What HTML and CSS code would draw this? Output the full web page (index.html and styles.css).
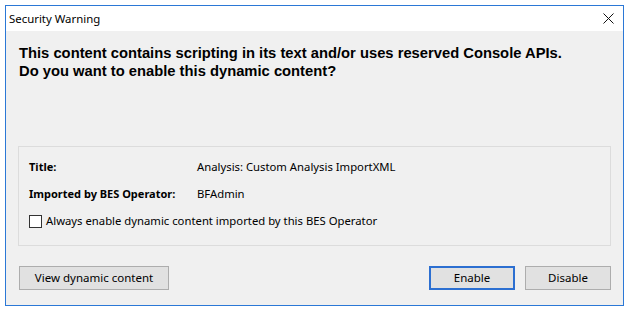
FILE: index.html
```html
<!DOCTYPE html>
<html lang="en">

<head>
    <meta charset="UTF-8">
    <meta name="viewport" content="width=device-width, initial-scale=1.0">
    <title>Security Warning</title>
    <link rel="stylesheet" href="styles.css">
</head>

<body>
    <div class="window">
        <div class="titlebar">
            <span class="caption">Security Warning</span>
            <svg class="close" width="11" height="11" viewBox="0 0 11 11">
                <path d="M0.5 0.5 L10.5 10.5 M10.5 0.5 L0.5 10.5" stroke="#111" stroke-width="1" fill="none" />
            </svg>
        </div>

        <div class="content">
            <p class="warning">
                This content contains scripting in its text and/or uses reserved Console APIs.<br>
                Do you want to enable this dynamic content?
            </p>

            <div class="details">
                <div class="row">
                    <span class="label">Title:</span>
                    <span class="value">Analysis: Custom Analysis ImportXML</span>
                </div>
                <div class="row">
                    <span class="label">Imported by BES Operator:</span>
                    <span class="value">BFAdmin</span>
                </div>
                <label class="check">
                    <span class="box"></span>
                    Always enable dynamic content imported by this BES Operator
                </label>
            </div>

            <div class="buttons">
                <button class="btn wide">View dynamic content</button>
                <div class="right">
                    <button class="btn default">Enable</button>
                    <button class="btn">Disable</button>
                </div>
            </div>
        </div>
    </div>
</body>

</html>
```

FILE: styles.css
```css
body {
    margin: 0;
    padding: 5px;
    background: #fff;
    font-family: "Noto Sans", sans-serif;
    font-size: 11.3px;
    color: #000;
}

.window {
    width: 617px;
    border: 1px solid #2b78d6;
    background: #f0f0f0;
}

.titlebar {
    height: 25px;
    background: #fff;
    display: flex;
    align-items: center;
    justify-content: space-between;
    padding: 0 9px 0 3px;
}

.caption {
    font-size: 11.4px;
    line-height: 16px;
}

.content {
    padding: 13px 12px 15px 12px;
}

.warning {
    margin: 0 0 0 1px;
    font-family: "Liberation Sans", Arial, sans-serif;
    font-weight: bold;
    font-size: 14.75px;
    line-height: 18px;
}

.details {
    margin-top: 66px;
    border: 1px solid #dcdcdc;
    padding: 12px 0 0 10px;
    box-sizing: border-box;
    height: 100px;
}

.row {
    display: flex;
    line-height: 16px;
    margin-bottom: 11px;
}

.label {
    width: 168px;
    font-weight: bold;
    font-size: 11px;
}

.check {
    display: flex;
    align-items: center;
    gap: 4px;
    line-height: 16px;
    margin-top: 1px;
}

.box {
    width: 11px;
    height: 11px;
    border: 1px solid #333;
    background: #fff;
}

.buttons {
    margin-top: 20px;
    display: flex;
    justify-content: space-between;
}

.right {
    display: flex;
    gap: 10px;
}

.btn {
    height: 24px;
    width: 86px;
    border: 1px solid #adadad;
    background: #e1e1e1;
    font-family: "Noto Sans", sans-serif;
    font-size: 11.5px;
    color: #000;
    padding: 0 0 1px 0;
}

.btn.wide {
    width: 150px;
    margin-left: 1px;
}

.btn.default {
    border: 2px solid #2c6fd1;
}
```
